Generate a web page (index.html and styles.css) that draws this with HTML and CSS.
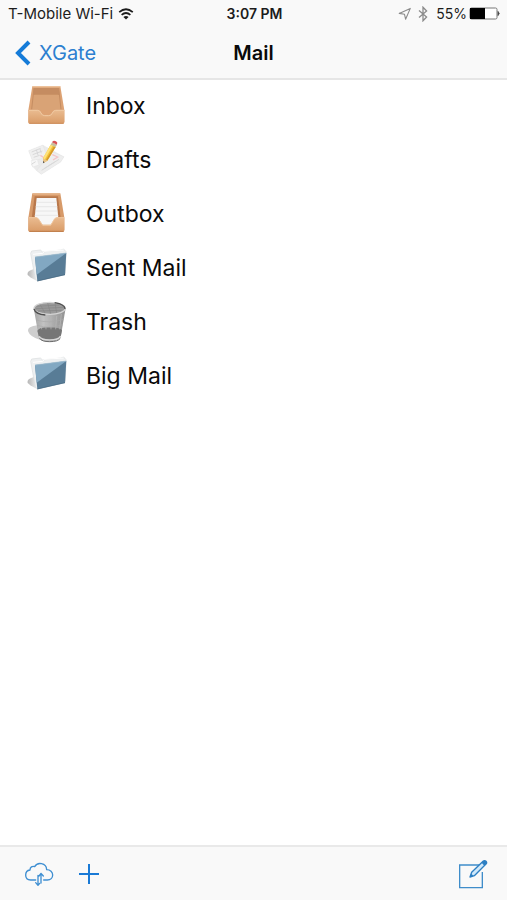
FILE: index.html
```html
<!DOCTYPE html>
<html lang="en">
<head>
<meta charset="utf-8">
<meta name="viewport" content="width=device-width, initial-scale=1">
<title>Mail</title>
<link rel="stylesheet" href="styles.css">
</head>
<body>
<header class="top">
  <div class="status">
    <div class="status-side">
      <span>T-Mobile Wi-Fi</span>
      <svg class="wifi" viewBox="0 0 16 12" aria-hidden="true"><path d="M1.2 4.2Q8-1.7 14.8 4.2M3.6 6.9Q8 3.1 12.4 6.9" fill="none" stroke="#1c1c1c" stroke-width="1.7"/><path d="M5.4 9Q8 6.8 10.6 9L8 11.6Z" fill="#1c1c1c"/></svg>
    </div>
    <span class="time">3:07 PM</span>
    <div class="status-side status-end">
      <svg class="locate" viewBox="0 0 14 14" aria-hidden="true"><path d="M1.2 6.4L12.3 1.4L7.6 12.2L6.5 7.3Z" fill="none" stroke="#8b8b8b" stroke-width="1.1" stroke-linejoin="round"/></svg>
      <svg class="bluetooth" viewBox="0 0 10 16" aria-hidden="true"><path d="M1 4.5L8.6 11L5 14.8V1.2L8.6 5L1 11.5" fill="none" stroke="#8b8b8b" stroke-width="1.3"/></svg>
      <span class="percent">55%</span>
      <svg class="battery" viewBox="0 0 32 14" aria-hidden="true"><rect x="1" y="1" width="27" height="11" rx="1.5" fill="#fff" stroke="#777"/><path d="M1 1h15v11H1z" fill="#000"/><path d="M29 4.5q2.4 2 0 4z" fill="#333" stroke="#555"/></svg>
    </div>
  </div>
  <nav class="navbar">
    <a class="back" href="#">
      <svg class="chevron" viewBox="0 0 16 26" aria-hidden="true"><path d="M14 2L3 13L14 24" fill="none" stroke="#157bd8" stroke-width="4"/></svg>
      <span>XGate</span>
    </a>
    <h1 class="title">Mail</h1>
  </nav>
</header>

<svg class="defs" aria-hidden="true">
  <defs>
    <linearGradient id="wood" x1="0" y1="0" x2="0" y2="1"><stop offset="0" stop-color="#eabc91"/><stop offset="1" stop-color="#d99b67"/></linearGradient>
    <linearGradient id="metal"><stop offset="0" stop-color="#a5a5a5"/><stop offset=".3" stop-color="#c2c2c2"/><stop offset=".75" stop-color="#a2a2a2"/><stop offset="1" stop-color="#929292"/></linearGradient>
    <linearGradient id="shade"><stop offset="0" stop-color="#b5b5b5"/><stop offset="1" stop-color="#ededed"/></linearGradient>
    <symbol id="folder" viewBox="0 0 180 150">
      <path d="M38 99Q34 86 59 80L64 116L46 106Z" fill="url(#shade)"/>
      <path d="M47 34L50 27L76 24L83 30L137 24L146 21L153 29L151 94L67 117L61 111Z" fill="#eef0f1" stroke="#d9dcde" stroke-width="2"/>
      <path d="M54 37L83 34L88 28L146 24" fill="none" stroke="#fff" stroke-width="3"/>
      <path d="M60 45L154 33L150 99L67 118Z" fill="#587c96"/>
      <path d="M60 45L154 33L65 98Z" fill="#82a8c2"/>
      <path d="M60 45L154 33" stroke="#a9c4d5" stroke-width="2"/>
      <path d="M67 117L150 98" stroke="#46677e" stroke-width="2"/>
    </symbol>
  </defs>
</svg>

<main class="content">
  <ul class="folders">
    <li><a class="folder" href="#">
      <svg class="icon" viewBox="0 0 180 150" aria-hidden="true">
        <path d="M52 19H136L148 91V126Q148 131 143 131H45Q40 131 40 126V91Z" fill="#dda273"/>
        <path d="M57 24H131L134 45H55Z" fill="#c58c61"/>
        <path d="M58 44H130L138 90H50Z" fill="#d9a376"/>
        <path d="M57 24L50 88M131 24L138 88" stroke="#c48d62" stroke-width="3"/>
        <path d="M53 20H136" stroke="#edc29c" stroke-width="4"/>
        <path d="M41 90H68Q75 90 78 98Q81 106 89 106H101Q109 106 112 98Q115 90 122 90H148V126Q148 131 143 131H45Q40 131 40 126Z" fill="url(#wood)"/>
        <path d="M42 91H68Q75 91 78 99Q81 107 89 107H101Q109 107 112 99Q115 91 122 91H147" fill="none" stroke="#f0caa3" stroke-width="3"/>
        <path d="M43 130H146" stroke="#c98a58" stroke-width="2"/>
      </svg><span>Inbox</span></a></li>
    <li><a class="folder" href="#">
      <svg class="icon" viewBox="0 0 180 150" aria-hidden="true">
        <path d="M41 50L84 33L112 48L126 56L147 68L137 84L79 121L65 111L49 94L54 83Z" fill="#ebebeb"/>
        <path d="M41 50L84 33L96 69L53 82Z" fill="#f0f0f0" stroke="#dedede"/>
        <path d="M112 54L147 68L137 84L79 121L65 109Z" fill="#eee" stroke="#ddd"/>
        <path d="M48 80L67 76L72 93L53 99Z" fill="#f7f7f7" stroke="#dcdcdc"/>
        <path d="M50 54L77 43M53 62L82 51M56 70L74 64M49 91L62 83M80 109L119 84M87 104L132 76" stroke="#d9d9d9" stroke-width="3"/>
        <path d="M64 47L69 63M75 45L79 58" stroke="#cfcfd2" stroke-width="2"/>
        <path d="M112 62L128 69L114 78M76 64L90 73" fill="none" stroke="#f3c4c7" stroke-width="4"/>
        <path d="M107 32L122 39L97 80L85 87L84 73Z" fill="#f4c43a"/>
        <path d="M107 32L113 35L89 77L84 73Z" fill="#ffe27a"/>
        <path d="M122 39L97 80L93 78L117 37Z" fill="#d69a29"/>
        <path d="M84 73L97 80L85 87Z" fill="#e8c38d"/><path d="M84 81L89 85L84 88Z" fill="#555"/>
        <path d="M107 32L111 25L126 32L122 39Z" fill="#c6bf9e"/>
        <path d="M111 25Q115 18 123 22Q129 25 126 32Z" fill="#d95255"/>
      </svg><span>Drafts</span></a></li>
    <li><a class="folder" href="#">
      <svg class="icon" viewBox="0 0 180 150" aria-hidden="true">
        <path d="M52 16H136L148 89V126Q148 131 143 131H45Q40 131 40 126V89Z" fill="#d79a69"/>
        <path d="M59 25H129L137 91H50Z" fill="#b9784b"/>
        <path d="M54 18H135" stroke="#e8b88e" stroke-width="4"/>
        <path d="M65 30H124L132 110H57Z" fill="#f7f7f7"/>
        <path d="M64 43H126M62 56H127M61 69H128M59 82H130" stroke="#e0e0e0" stroke-width="2"/>
        <path d="M41 88H62Q68 88 71 93L83 111H107L118 93Q121 88 127 88H148V126Q148 131 143 131H45Q40 131 40 126Z" fill="url(#wood)"/>
        <path d="M42 89H62Q68 89 71 94L83 112H107L118 94Q121 89 127 89H147" fill="none" stroke="#f0c69d" stroke-width="3"/>
        <path d="M43 130H146" stroke="#bd7b48" stroke-width="3"/>
      </svg><span>Outbox</span></a></li>
    <li><a class="folder" href="#">
      <svg class="icon" aria-hidden="true"><use href="#folder"/></svg><span>Sent Mail</span></a></li>
    <li><a class="folder" href="#">
      <svg class="icon" viewBox="0 0 180 150" aria-hidden="true">
        <path d="M68 88Q37 91 39 105Q44 122 76 132L98 133Z" fill="#cecece"/>
        <path d="M56 36L72 126Q75 137 104 137Q133 136 137 123L152 36Z" fill="url(#metal)"/>
        <path d="M67 104Q73 93 104 94Q137 95 141 103L137 123Q133 134 104 134Q75 134 72 124Z" fill="#767676"/>
        <path d="M74 57L80 100M91 61L93 100M108 62V100M125 60L122 100M139 54L134 100" stroke="#b9b9b9" stroke-width="2"/>
        <path d="M63 72Q104 84 146 70M66 88Q104 100 143 86" fill="none" stroke="#aaa" stroke-width="2"/>
        <ellipse cx="104" cy="37" rx="47" ry="18" fill="#999" stroke="#d5d5d5" stroke-width="4"/>
        <path d="M65 31L133 27M62 38L146 34M69 45L140 43M75 25L90 51M98 21L107 53M120 22L125 50" stroke="#858585" stroke-width="2"/>
        <path d="M57 39Q62 55 91 57M119 20Q150 25 150 39" fill="none" stroke="#4f4f4f" stroke-width="4"/>
        <path d="M72 121Q76 132 104 132Q132 132 137 120" fill="none" stroke="#d8d8d8" stroke-width="5"/>
        <path d="M74 127Q80 137 104 137Q129 137 136 127" fill="none" stroke="#6b6b6b" stroke-width="3"/>
      </svg><span>Trash</span></a></li>
    <li><a class="folder" href="#">
      <svg class="icon" aria-hidden="true"><use href="#folder"/></svg><span>Big Mail</span></a></li>
  </ul>
</main>

<footer class="toolbar">
  <button class="tool" type="button" aria-label="Sync">
    <svg class="cloud" viewBox="0 0 90 78" aria-hidden="true"><g fill="none" stroke="#3f8fd2" stroke-width="4" stroke-linecap="round" stroke-linejoin="round"><path d="M35 57H20C9 57 5 49 5 42C5 34 11 28 18 27C18 18 25 14 32 17C40 2 67 5 68 26C79 26 86 34 86 42C86 50 80 57 70 57H59"/><path d="M42 43V71M35 65L42 73L47 67M51 66V39M45 45L51 37L58 45"/></g></svg>
  </button>
  <button class="tool" type="button" aria-label="Add">
    <svg class="plus" viewBox="0 0 22 22" aria-hidden="true"><path d="M11 1V21M1 11H21" stroke="#1a7ad6" stroke-width="2"/></svg>
  </button>
  <button class="tool compose" type="button" aria-label="Compose">
    <svg class="pencil" viewBox="0 0 90 90" aria-hidden="true"><path d="M67 18H5V86H73V39" fill="none" stroke="#3f8dca" stroke-width="4"/><path d="M36 54L41 40L76 6Q80 3 84 7Q88 11 84 15L49 50Z" fill="#cfe8fa" stroke="#2d7fc3" stroke-width="4" stroke-linejoin="round"/><path d="M71 11L79 20L84 15Q88 11 84 7Q80 3 76 6ZM36 54L40 44L46 50Z" fill="#2d7fc3"/></svg>
  </button>
</footer>
</body>
</html>
```
FILE: styles.css
```css
* {
  box-sizing: border-box;
}

body {
  margin: 0;
  min-height: 100vh;
  display: flex;
  flex-direction: column;
  background: #fff;
  color: #0a0a0a;
  font-family: Inter, "Liberation Sans", sans-serif;
}

.top {
  background: #f9f9f9;
  border-bottom: 2px solid #e6e6e6;
}

.status {
  display: grid;
  grid-template-columns: 1fr auto 1fr;
  align-items: center;
  height: 28px;
  padding: 0 6px 0 8px;
  font-size: 15px;
  line-height: 20px;
  color: #1c1c1c;
}

.status-side {
  display: flex;
  align-items: center;
  gap: 5px;
}

.status-end {
  justify-content: flex-end;
  gap: 2px;
}

.time {
  font-size: 14px;
  font-weight: 600;
}

.percent {
  font-size: 14px;
}

.wifi {
  width: 16px;
  height: 12px;
}

.locate {
  width: 14px;
  height: 14px;
}

.bluetooth {
  width: 10px;
  height: 16px;
  margin: 0 6px 0 4px;
}

.battery {
  width: 32px;
  height: 14px;
}

.navbar {
  display: grid;
  grid-template-columns: 1fr auto 1fr;
  align-items: center;
  height: 50px;
  padding: 0 15px;
}

.back {
  display: flex;
  align-items: center;
  gap: 8px;
  color: #2c7fd0;
  font-size: 20px;
  line-height: 28px;
  text-decoration: none;
}

.chevron {
  width: 16px;
  height: 26px;
}

.title {
  margin: 0;
  font-size: 20px;
  line-height: 28px;
  font-weight: 600;
}

.defs {
  position: absolute;
  width: 0;
  height: 0;
}

.content {
  flex: 1;
}

.folders {
  margin: 0;
  padding: 0;
  list-style: none;
}

.folder {
  display: flex;
  align-items: flex-start;
  gap: 11px;
  height: 54px;
  padding: 0 15px;
  color: #0a0a0a;
  font-size: 23px;
  line-height: 52px;
  text-decoration: none;
}

.icon {
  flex: none;
  width: 60px;
  height: 50px;
}

.toolbar {
  display: flex;
  align-items: center;
  gap: 24px;
  height: 55px;
  padding: 0 19px 0 24px;
  background: #f9f9f9;
  border-top: 2px solid #e9e9e9;
}

.tool {
  display: flex;
  padding: 0;
  border: 0;
  background: none;
}

.compose {
  margin-left: auto;
}

.cloud {
  width: 30px;
  height: 26px;
}

.plus {
  width: 22px;
  height: 22px;
}

.pencil {
  width: 30px;
  height: 30px;
}
```
